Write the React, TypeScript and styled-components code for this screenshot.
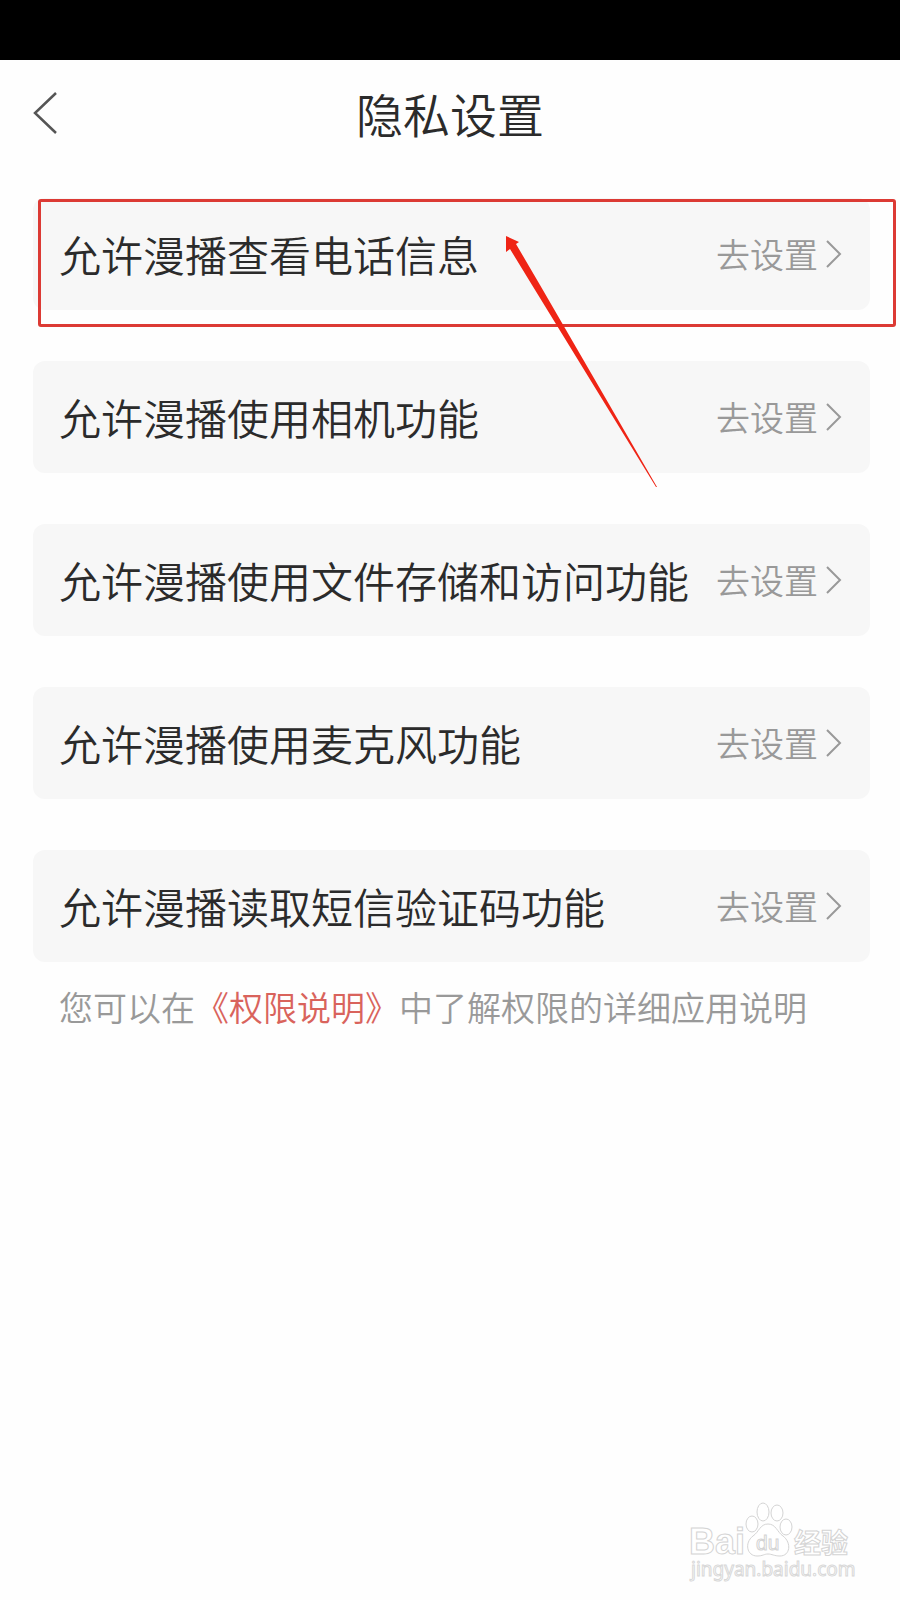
import React from "react";
import styled, { createGlobalStyle } from "styled-components";

const GlobalStyle = createGlobalStyle`
  *, *::before, *::after { box-sizing: border-box; }
  body {
    margin: 0;
    background: #fefefe;
    color: #2b2b2b;
    font-family: "Noto Sans CJK SC", "Noto Sans", sans-serif;
    font-weight: 350;
  }
`;

const Screen = styled.div`
  position: relative;
  display: flex;
  flex-direction: column;
  min-height: 100vh;
  overflow: hidden;
`;

const StatusBar = styled.div`
  height: 60px;
  background: #000;
`;

const Header = styled.header`
  display: grid;
  grid-template-columns: 48px 1fr 48px;
  align-items: center;
  height: 104px;
  padding: 2px 24px 0;
`;

const BackButton = styled.button`
  display: flex;
  align-items: center;
  height: 48px;
  padding: 0 0 0 8px;
  border: 0;
  background: none;
  color: #555;
`;

const Title = styled.h1`
  margin: 0;
  font-size: 47px;
  line-height: 64px;
  font-weight: inherit;
  text-align: center;
`;

const Main = styled.main`
  padding: 34px 30px 0 33px;
`;

const List = styled.ul`
  display: flex;
  flex-direction: column;
  gap: 51px;
  margin: 0;
  padding: 0;
  list-style: none;
`;

const Row = styled.li`
  position: relative;
  display: flex;
  align-items: center;
  justify-content: space-between;
  height: 112px;
  padding: 0 28px 0 26px;
  border-radius: 12px;
  background: #f7f7f7;
  white-space: nowrap;
`;

const RowLabel = styled.span`
  font-size: 42px;
  line-height: 60px;
`;

const SettingButton = styled.button`
  display: flex;
  align-items: center;
  gap: 8px;
  padding: 0;
  border: 0;
  background: none;
  color: #999;
  font: inherit;
  font-size: 34px;
  line-height: 48px;
`;

const Note = styled.p`
  margin: 21px 0 0;
  padding: 0 26px;
  color: #999;
  font-size: 34px;
  line-height: 48px;
`;

const NoteLink = styled.a`
  color: #d9635c;
  text-decoration: none;
`;

const Highlight = styled.div`
  position: absolute;
  top: 1px;
  left: 5px;
  right: -26px;
  height: 128px;
  border: 3px solid #dc3a34;
  border-radius: 3px;
  pointer-events: none;
`;

const Arrow = styled.svg`
  position: absolute;
  top: 38px;
  left: 472px;
  z-index: 1;
  pointer-events: none;
`;

const Watermark = styled.div`
  display: flex;
  justify-content: flex-end;
  margin-top: auto;
  padding: 0 42px 8px 0;
`;

const permissions = [
  "允许漫播查看电话信息",
  "允许漫播使用相机功能",
  "允许漫播使用文件存储和访问功能",
  "允许漫播使用麦克风功能",
  "允许漫播读取短信验证码功能",
];

function Pointer() {
  return (
    <Arrow width="154" height="252" viewBox="0 0 154 252" aria-hidden="true">
      <path d="M1 0 L14 6 L11 8 L35 49 L152 251 L151 251 L27 49 L5 13 L1 16 Z" fill="#ef2415" />
    </Arrow>
  );
}

function BaiduMark() {
  return (
    <svg width="174" height="98" viewBox="0 0 174 98" role="img" aria-label="Baidu 经验">
      <g fill="#fff" stroke="#d4d4d4" strokeWidth="1">
        <ellipse cx="68" cy="30" rx="6" ry="8" />
        <ellipse cx="79" cy="18" rx="6" ry="9" />
        <ellipse cx="93" cy="19" rx="6" ry="8" />
        <ellipse cx="102" cy="33" rx="6" ry="8" />
        <path d="M84 30 C76 30 75 38 69 42 C60 49 63 62 73 62 C79 62 80 60 84 60 C88 60 90 62 96 62 C106 62 108 49 99 42 C93 38 92 30 84 30 Z" />
      </g>
      <g fill="#fff" stroke="#d4d4d4" strokeWidth="1" fontWeight="700">
        <text x="5" y="60" fontFamily="Liberation Sans" fontSize="36">Bai</text>
        <text x="72" y="56" fontFamily="Liberation Sans" fontSize="21" fontWeight="400">du</text>
        <text x="110" y="59" fontFamily="Noto Sans CJK SC" fontSize="27">经验</text>
      </g>
      <text x="7" y="82" fill="#fff" stroke="#d8d8d8" strokeWidth="1" fontFamily="Noto Sans" fontSize="19" fontWeight="400">
        jingyan.baidu.com
      </text>
    </svg>
  );
}

export default function App() {
  return (
    <Screen>
      <GlobalStyle />
      <StatusBar />
      <Header>
        <BackButton aria-label="返回">
          <svg width="28" height="44" viewBox="0 0 28 44" fill="none" stroke="currentColor" strokeWidth="2.5">
            <path d="M24 2 L3 22 L24 42" />
          </svg>
        </BackButton>
        <Title>隐私设置</Title>
      </Header>
      <Main>
        <List>
          {permissions.map((label, index) => (
            <Row key={label}>
              <RowLabel id={`permission-${index}`}>{label}</RowLabel>
              <SettingButton aria-describedby={`permission-${index}`}>
                去设置
                <svg width="16" height="30" viewBox="0 0 16 30" fill="none" stroke="currentColor" strokeWidth="2">
                  <path d="M1 2 L14 15 L1 28" />
                </svg>
              </SettingButton>
              {index === 0 && (
                <>
                  <Highlight />
                  <Pointer />
                </>
              )}
            </Row>
          ))}
        </List>
        <Note>
          您可以在<NoteLink href="#permissions">《权限说明》</NoteLink>中了解权限的详细应用说明
        </Note>
      </Main>
      <Watermark>
        <BaiduMark />
      </Watermark>
    </Screen>
  );
}
